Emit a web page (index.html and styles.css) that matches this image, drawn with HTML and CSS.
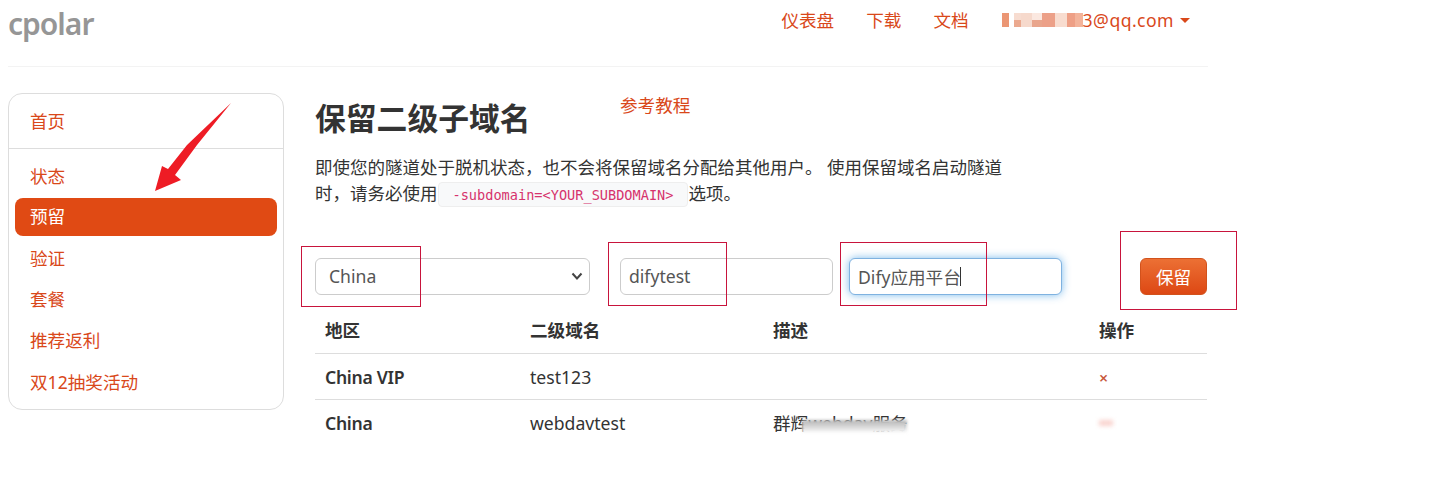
FILE: index.html
```html
<!DOCTYPE html>
<html lang="zh-CN">
<head>
<meta charset="utf-8">
<title>cpolar</title>
<link rel="stylesheet" href="styles.css">
</head>
<body>
<div class="page">
  <header class="topbar">
    <a class="brand">cpolar</a>
    <nav class="topnav">
      <a>仪表盘</a>
      <a>下载</a>
      <a>文档</a>
      <a class="account"><span class="mosaic"><i class="m1"></i><i class="m2"></i><i class="m3"></i><i class="m4"></i><i class="m5"></i><i class="m6"></i><i class="m7"></i><i class="m8"></i><i class="m9"></i></span>3@qq.com<b class="caret"></b></a>
    </nav>
  </header>
  <div class="layout">
    <aside class="sidebar">
      <a class="side-home">首页</a>
      <div class="side-list">
        <a>状态</a>
        <a class="active">预留</a>
        <a>验证</a>
        <a>套餐</a>
        <a>推荐返利</a>
        <a>双12抽奖活动</a>
      </div>
    </aside>
    <main class="content">
      <div class="title-row">
        <h1>保留二级子域名</h1>
        <a class="tutorial">参考教程</a>
      </div>
      <p class="lead"><span>即使您的隧道处于脱机状态，也不会将保留域名分配给其他用户。 使用保留域名启动隧道</span><br><span>时，请务必使用</span><code>-subdomain=&lt;YOUR_SUBDOMAIN&gt;</code><span>选项。</span></p>
      <form class="reserve-form">
        <select class="field field-select"><option>China</option></select>
        <input class="field field-name" value="difytest">
        <span class="desc-wrap"><input class="field field-desc" value="Dify应用平台"><i class="text-cursor"></i></span>
        <button type="button" class="btn">保留</button>
      </form>
      <table>
        <thead>
          <tr><th class="c1">地区</th><th class="c2">二级域名</th><th class="c3">描述</th><th>操作</th></tr>
        </thead>
        <tbody>
          <tr><td class="region">China VIP</td><td>test123</td><td></td><td><span class="del">×</span></td></tr>
          <tr class="last"><td class="region">China</td><td>webdavtest</td><td class="blur-cell">群辉webdav服务<i class="smear"></i></td><td><span class="del-blur"></span></td></tr>
        </tbody>
      </table>
    </main>
  </div>
</div>
<svg class="arrow" width="90" height="100" viewBox="0 0 90 100"><polygon points="80,3 36,45 17,69 11,66 4,91 30,80 24,75 46,45" fill="#ee1c25"/></svg>
<div class="mark mark-a"></div>
<div class="mark mark-b"></div>
<div class="mark mark-c"></div>
<div class="mark mark-d"></div>
</body>
</html>
```
FILE: styles.css
```css
* { box-sizing: border-box; }
html, body { margin: 0; padding: 0; background: #fff; }
body {
  position: relative;
  height: 500px;
  overflow: hidden;
  font-family: "Noto Sans", "Noto Sans CJK SC", sans-serif;
  font-size: 17.6px;
  color: #333;
}
a { color: #d9481a; text-decoration: none; }
.page { width: 1200px; margin-left: 8px; }
.topbar {
  height: 67px;
  display: flex;
  justify-content: space-between;
  align-items: flex-start;
  border-bottom: 1px solid #f3f3f3;
}
.brand {
  color: #969696;
  font-size: 30px;
  font-weight: 600;
  line-height: 40px;
  margin-top: 4px;
  letter-spacing: -1px;
}
.topnav {
  display: flex;
  gap: 32px;
  margin-right: 18px;
  line-height: 40px;
  font-size: 17.6px;
}
.account { display: flex; align-items: center; margin-left: 1px; letter-spacing: .45px; }
.mosaic { display: flex; width: 81px; height: 14px; }
.mosaic i { display: block; height: 14px; }
.mosaic .m1 { width: 7px; background: #eb9674; }
.mosaic .m2 { width: 5px; background: #fff; }
.mosaic .m3 { width: 7px; background: linear-gradient(#f7dcd0 50%, #eba98f 50%); }
.mosaic .m4 { width: 11px; background: #f6d9cc; }
.mosaic .m5 { width: 10px; background: linear-gradient(#fbe8e0 50%, #e9a58c 50%); }
.mosaic .m6 { width: 13px; background: #eca088; }
.mosaic .m7 { width: 12px; background: #f8dccf; }
.mosaic .m8 { width: 8px; background: #ee9f85; }
.mosaic .m9 { width: 8px; background: #f3b39a; }
.caret {
  width: 0; height: 0;
  margin-left: 6px;
  border-left: 5px solid transparent;
  border-right: 5px solid transparent;
  border-top: 5px solid #d9481a;
}
.layout { display: flex; margin-top: 26px; align-items: flex-start; }
.sidebar {
  width: 276px;
  height: 317px;
  flex: none;
  border: 1px solid #ddd;
  border-radius: 14px;
  padding: 0 6px;
}
.sidebar a { display: block; padding-left: 15px; }
.side-home {
  height: 55px;
  line-height: 55px;
  margin: 0 -6px;
  padding-left: 21px !important;
  border-bottom: 1px solid #ddd;
}
.side-list { padding-top: 7px; display: flex; flex-direction: column; }
.side-list a { height: 41.3px; line-height: 41px; }
.side-list a.active {
  height: 38px;
  line-height: 37px;
  margin: 1px 0 1.5px;
  background: #e04a14;
  border-radius: 8px;
  color: #fff;
}
.content { width: 892px; margin-left: 31px; flex: none; }
.title-row { display: flex; height: 50px; position: relative; }
h1 {
  margin: 0;
  font-size: 30.8px;
  font-weight: 700;
  line-height: 50px;
}
.tutorial { position: absolute; left: 305px; top: 0; line-height: 25px; }
.lead {
  width: 692px;
  margin: 12px 0 0;
  font-size: 17.5px;
  line-height: 25.5px;
}
code {
  display: inline-block;
  font-family: "DejaVu Sans Mono", "Liberation Mono", monospace;
  font-size: 13.6px;
  line-height: 24px;
  height: 25px;
  color: #d6336c;
  background: #f8f9fa;
  border: 1px solid #eee;
  border-radius: 4px;
  padding: 0 14px;
  vertical-align: 0;
}
.reserve-form { display: flex; align-items: center; margin-top: 51px; height: 37px; }
.field {
  height: 37px;
  border: 1px solid #ccc;
  border-radius: 6px;
  font: inherit;
  color: #555;
  background: #fff;
  padding: 0 8px;
  outline: 0;
}
.field-select {
  width: 275px;
  padding-left: 13px;
  appearance: none;
  background: #fff url("data:image/svg+xml,%3Csvg xmlns='http://www.w3.org/2000/svg' width='12' height='9' viewBox='0 0 12 9'%3E%3Cpath d='M1.5 1.5 6 6.5l4.5-5' fill='none' stroke='%23444' stroke-width='2'/%3E%3C/svg%3E") no-repeat right 6px center;
}
.field-name { width: 213px; margin-left: 30px; }
.desc-wrap { position: relative; margin-left: 16px; display: block; height: 37px; }
.field-desc {
  width: 213px;
  display: block;
  border-color: #7fb2e0;
  box-shadow: 0 0 8px rgba(102, 175, 233, .85);
}
.text-cursor { position: absolute; left: 111px; top: 9px; width: 1px; height: 19px; background: #333; }
.btn {
  width: 67px;
  height: 37px;
  margin-left: 78px;
  border: 1px solid #d2521c;
  border-radius: 6px;
  background: linear-gradient(#ec7034, #dd4814);
  color: #fff;
  font: inherit;
  padding: 0;
}
table { width: 892px; border-collapse: collapse; table-layout: fixed; }
th { text-align: left; font-weight: 700; height: 59px; padding: 12px 10px 0; border-bottom: 1px solid #ddd; }
td { height: 46px; padding: 0 10px; border-bottom: 1px solid #ddd; }
.last td { border-bottom: 0; }
.c1 { width: 205px; }
.c2 { width: 243px; }
.c3 { width: 326px; }
.region { font-weight: 600; letter-spacing: -.3px; }
.del { color: #c8593c; font-size: 16px; font-weight: 600; }
.blur-cell { position: relative; }
.smear {
  position: absolute;
  left: 39px; top: 20px;
  width: 105px; height: 13px;
  background: linear-gradient(#b4b4b4, #ddd 60%, #fff);
  filter: blur(1.5px);
}
.del-blur { display: block; width: 14px; height: 6px; background: #f9d3ce; filter: blur(2px); }
.arrow { position: absolute; left: 151px; top: 100px; }
.mark { position: absolute; border: 1px solid #c8143c; }
.mark-a { left: 301px; top: 246px; width: 120px; height: 61px; }
.mark-b { left: 608px; top: 242px; width: 119px; height: 64px; }
.mark-c { left: 840px; top: 242px; width: 147px; height: 64px; }
.mark-d { left: 1120px; top: 231px; width: 117px; height: 79px; }
```
